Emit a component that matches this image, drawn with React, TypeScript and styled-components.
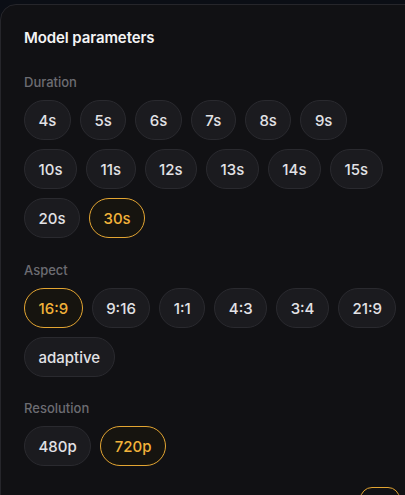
import React from "react";
import styled, { createGlobalStyle } from "styled-components";

const Global = createGlobalStyle`
  html, body { margin: 0; padding: 0; background: #0b0e15; overflow: hidden; }
  body { font-family: Inter, "Noto Sans", sans-serif; -webkit-font-smoothing: antialiased; }
`;

const Page = styled.div`
  width: 405px;
  height: 495px;
  overflow: hidden;
  padding-top: 4px;
  box-sizing: border-box;
`;

const Panel = styled.section`
  width: 424px;
  min-height: 600px;
  box-sizing: border-box;
  background: #111114;
  border: 1px solid #26262b;
  border-radius: 16px;
  padding: 23px 23px 24px 23px;
  display: flex;
  flex-direction: column;
`;

const Title = styled.h2`
  margin: 0 0 25px 0;
  font-size: 15px;
  line-height: 20px;
  font-weight: 600;
  color: #f4f4f5;
  letter-spacing: -0.1px;
`;

const Section = styled.div<{ $after: number }>`
  display: flex;
  flex-direction: column;
  gap: 9px;
  margin-bottom: ${(p) => p.$after}px;
`;

const Label = styled.div`
  font-size: 13px;
  line-height: 18px;
  color: #6c6c72;
  font-weight: 500;
`;

const Chips = styled.div`
  display: flex;
  flex-wrap: wrap;
  gap: 9px;
  max-width: 378px;
`;

const Chip = styled.button<{ $active?: boolean }>`
  height: 40px;
  padding: 0 13.5px;
  border-radius: 20px;
  box-sizing: border-box;
  font-family: inherit;
  font-size: 15px;
  font-weight: 500;
  cursor: pointer;
  background: ${(p) => (p.$active ? "#16140f" : "#1b1b1f")};
  border: 1px solid ${(p) => (p.$active ? "#e3a532" : "#2a2a2f")};
  color: ${(p) => (p.$active ? "#f2b23a" : "#e2e2e6")};
`;

const BottomRow = styled.div`
  display: flex;
  justify-content: flex-end;
`;

const Pill = styled.div`
  width: 40px;
  height: 24px;
  border-radius: 12px;
  border: 1px solid #e3a532;
  box-sizing: border-box;
`;

const durations = ["4s", "5s", "6s", "7s", "8s", "9s", "10s", "11s", "12s", "13s", "14s", "15s", "20s", "30s"];
const aspects = ["16:9", "9:16", "1:1", "4:3", "3:4", "21:9", "adaptive"];
const resolutions = ["480p", "720p"];

function Group({ label, items, active, after }: { label: string; items: string[]; active: string; after: number }) {
  return (
    <Section $after={after}>
      <Label>{label}</Label>
      <Chips>
        {items.map((i) => (
          <Chip key={i} $active={i === active}>
            {i}
          </Chip>
        ))}
      </Chips>
    </Section>
  );
}

export default function App() {
  return (
    <Page>
      <Global />
      <Panel>
        <Title>Model parameters</Title>
        <Group label="Duration" items={durations} active="30s" after={23} />
        <Group label="Aspect" items={aspects} active="16:9" after={22} />
        <Group label="Resolution" items={resolutions} active="720p" after={21} />
        <BottomRow>
          <Pill />
        </BottomRow>
      </Panel>
    </Page>
  );
}
